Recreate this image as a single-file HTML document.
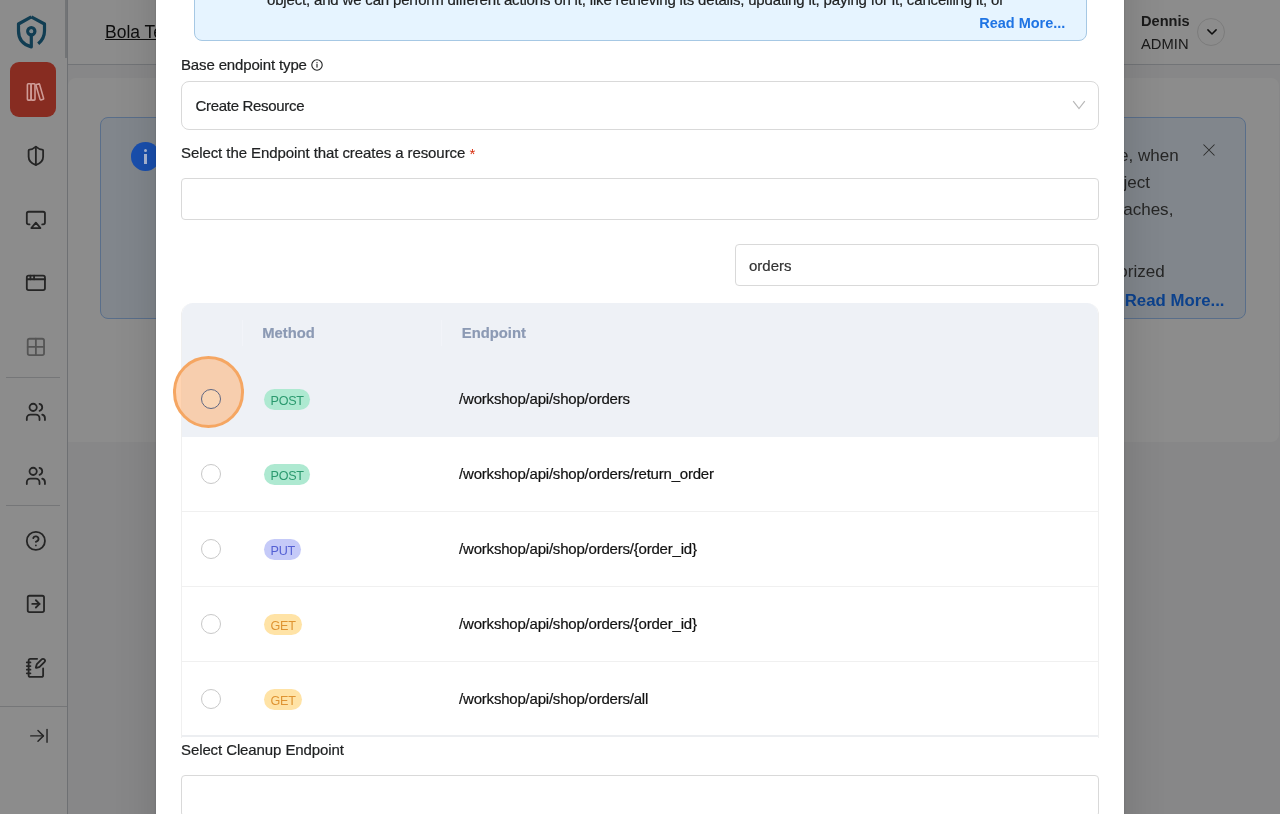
<!DOCTYPE html>
<html>
<head>
<meta charset="utf-8">
<style>
*{box-sizing:border-box;margin:0;padding:0}
html,body{width:1280px;height:814px;overflow:hidden;background:#f6f6f7;font-family:"Liberation Sans",sans-serif;}
.abs{position:absolute}
#page{position:absolute;left:0;top:0;width:1280px;height:814px;background:#f6f6f7;overflow:hidden;will-change:transform}
#sidebar{position:absolute;left:0;top:0;width:68px;height:814px;background:#fff;border-right:1px solid #c9ccd1}
#header{position:absolute;left:68px;top:0;width:1212px;height:65.3px;background:#fff;border-bottom:1.3px solid #d0d3d9}
#card{position:absolute;left:68px;top:77.5px;width:1210.5px;height:364.5px;background:#fff;border-radius:8px 8px 8px 0}
#banner{position:absolute;left:100px;top:116.5px;width:1146px;height:202.5px;background:#ebf5ff;border:1px solid #a2c8fb;border-radius:8px}
.sico{position:absolute;left:24.9px;width:21.75px;height:21.75px;fill:none;stroke:#444;stroke-width:2;stroke-linecap:round;stroke-linejoin:round}
.bt{font-size:17.05px;line-height:27px;color:#454545;white-space:nowrap}
.sdiv{position:absolute;left:6px;width:54px;height:1px;background:#d6d8db}
#overlay{position:absolute;left:0;top:0;width:1280px;height:814px;background:rgba(0,0,0,0.45)}
#modal{position:absolute;left:0;top:0;width:1280px;height:814px;color:#202223;-webkit-text-stroke:0.2px;will-change:transform}
#modal>*{margin-left:157px}
#mbg{position:absolute;left:156.25px;top:-60px;width:967.5px;height:934px;margin-left:0 !important;background:#fff;box-shadow:0 0 40px rgba(0,0,0,0.16),0 0 2px rgba(0,0,0,0.18)}
.lbl{position:absolute;left:24px;font-size:15px;line-height:20px;color:#202223;white-space:nowrap}
.box{position:absolute;left:24px;width:918px;background:#fff;border:1px solid #d9d9d9}
.row{position:absolute;left:0;width:918px;height:75px;border-bottom:1px solid #f0f0f0;background:#fff}
.radio{position:absolute;left:20px;top:27.2px;width:20px;height:20px;border-radius:50%;border:1px solid #c8c8c8;background:#fff}
.tag{-webkit-text-stroke:0;position:absolute;left:83px;top:26.5px;height:21px;border-radius:11px;font-size:12.6px;letter-spacing:-0.3px;line-height:24px;padding:0 6.3px 0 6.6px;white-space:nowrap}
.ep{position:absolute;left:278.1px;top:26.5px;letter-spacing:-0.21px;font-size:15px;line-height:20px;color:#121212;white-space:nowrap}
.post{background:#aee9d1;color:#2b9a6f}
.put{background:#c5caf8;color:#5460d4}
.get{background:#ffe3a6;color:#df9432}
</style>
</head>
<body>
<div id="page">
  <div id="header">
    <div class="abs" id="bola" style="left:37px;top:20px;font-size:17.5px;line-height:24px;color:#1a1a1a;text-decoration:underline;white-space:nowrap">Bola Test</div>
    <div class="abs" id="dennis" style="left:1073px;top:11.2px;font-size:14.6px;line-height:20px;font-weight:bold;color:#303030;white-space:nowrap">Dennis</div>
    <div class="abs" id="admin" style="left:1073px;top:34.2px;font-size:14.75px;line-height:20px;color:#303030;white-space:nowrap">ADMIN</div>
    <div class="abs" id="ddbtn" style="left:1129.3px;top:18.2px;width:28px;height:28px;border-radius:50%;border:1px solid #e1e1e1"></div>
    <svg class="abs" style="left:1136.5px;top:26px" width="14" height="12" viewBox="0 0 14 12"><path d="M2.9 3.9 L7 8 L11.1 3.9" fill="none" stroke="#1a1a1a" stroke-width="1.5" stroke-linecap="round" stroke-linejoin="round"/></svg>
  </div>
  <div id="card"></div>
  <div id="banner">
    <div class="abs bt" style="right:66.4px;top:24.8px">e, when</div>
    <div class="abs bt" style="left:1022.4px;top:51.7px">ject</div>
    <div class="abs bt" style="left:1022.2px;top:78.7px">aches,</div>
    <div class="abs bt" style="left:1017.3px;top:140.4px">orized</div>
    <div class="abs" style="right:20.5px;top:171.5px;font-size:16.8px;line-height:24px;font-weight:bold;color:#1677ff;white-space:nowrap">Read More...</div>
    <svg class="abs" style="left:1100.6px;top:25.2px" width="14" height="14" viewBox="0 0 14 14"><path d="M1.5 1.5 L12.5 12.5 M12.5 1.5 L1.5 12.5" fill="none" stroke="#505050" stroke-width="1.05"/></svg>
  </div>
  <div id="sidebar">
    <div class="abs" style="left:65px;top:0;width:2px;height:58px;background:#cfd3d8"></div>
    <svg class="abs" style="left:0;top:0" width="64" height="64" viewBox="0 0 64 64" fill="none" stroke="#1f6f96" stroke-width="3.2" stroke-linejoin="round">
      <path d="M31.3 16.9 L18.5 24 V31 C18.5 39.3 23.5 44.8 31.3 46.9 V36"/>
      <path d="M31.3 16.9 L44.5 24 V31 C44.5 36.3 42.3 40.4 38.2 43.8" stroke-linecap="butt"/>
      <circle cx="31.3" cy="31.3" r="3.6"/>
      <circle cx="31.3" cy="31.3" r="1.7" fill="#e2f6ff" stroke="none"/>
    </svg>
    <div class="abs" style="left:10.2px;top:62.3px;width:46px;height:55.2px;border-radius:9px;background:#f6503d"></div>
    <!-- shield-half -->
    <svg class="sico" style="left:25.23px;top:145.43px" viewBox="0 0 24 24"><path d="M20 13c0 5-3.5 7.5-7.66 8.95a1 1 0 0 1-.67-.01C7.5 20.5 4 18 4 13V6a1 1 0 0 1 1-1c2 0 4.500-1.200 6.240-2.720a1.170 1.170 0 0 1 1.520 0C14.510 3.810 17 5 19 5a1 1 0 0 1 1 1z"/><path d="M12 22V2"/></svg>
    <!-- airplay -->
    <svg class="sico" style="left:25.23px;top:208.72px" viewBox="0 0 24 24"><path d="M5 17H4a2 2 0 0 1-2-2V5a2 2 0 0 1 2-2h16a2 2 0 0 1 2 2v10a2 2 0 0 1-2 2h-1"/><path d="m12 15 5 6H7Z"/></svg>
    <!-- app-window -->
    <svg class="sico" style="left:25.23px;top:272.02px" viewBox="0 0 24 24"><rect x="2" y="4" width="20" height="16" rx="2"/><path d="M10 4v4"/><path d="M2 8h20"/><path d="M6 4v4"/></svg>
    <!-- grid -->
    <svg class="sico" style="left:25.23px;top:335.72px;stroke:#9c9c9c" viewBox="0 0 24 24"><rect x="3" y="3" width="18" height="18" rx="2"/><path d="M3 12h18"/><path d="M12 3v18"/></svg>
    <div class="sdiv" style="top:377.2px"></div>
    <!-- users -->
    <svg class="sico" style="left:25.23px;top:400.52px" viewBox="0 0 24 24"><path d="M16 21v-2a4 4 0 0 0-4-4H6a4 4 0 0 0-4 4v2"/><circle cx="9" cy="7" r="4"/><path d="M22 21v-2a4 4 0 0 0-3-3.870"/><path d="M16 3.130a4 4 0 0 1 0 7.750"/></svg>
    <svg class="sico" style="left:25.23px;top:465.03px" viewBox="0 0 24 24"><path d="M16 21v-2a4 4 0 0 0-4-4H6a4 4 0 0 0-4 4v2"/><circle cx="9" cy="7" r="4"/><path d="M22 21v-2a4 4 0 0 0-3-3.870"/><path d="M16 3.130a4 4 0 0 1 0 7.750"/></svg>
    <div class="sdiv" style="top:505.4px"></div>
    <!-- help -->
    <svg class="sico" style="left:25.23px;top:529.52px" viewBox="0 0 24 24"><circle cx="12" cy="12" r="10"/><path d="M9.090 9a3 3 0 0 1 5.830 1c0 2-3 3-3 3"/><path d="M12 17h.01"/></svg>
    <!-- square-arrow-right -->
    <svg class="sico" style="left:25.23px;top:593.23px" viewBox="0 0 24 24"><rect x="3" y="3" width="18" height="18" rx="2"/><path d="M8 12h8"/><path d="m12 16 4-4-4-4"/></svg>
    <!-- notebook-pen -->
    <svg class="sico" style="left:25.23px;top:656.72px" viewBox="0 0 24 24"><path d="M13.400 2H6a2 2 0 0 0-2 2v16a2 2 0 0 0 2 2h12a2 2 0 0 0 2-2v-7.400"/><path d="M2 6h4"/><path d="M2 10h4"/><path d="M2 14h4"/><path d="M2 18h4"/><path d="M21.378 5.626a1 1 0 1 0-3.004-3.004l-5.010 5.012a2 2 0 0 0-.506.854l-.837 2.870a.5.5 0 0 0 .620.620l2.870-.837a2 2 0 0 0 .854-.506z"/></svg>
    <div class="sdiv" style="top:705.6px;left:0;width:67px"></div>
    <!-- arrow-right-to-line -->
    <svg class="sico" style="left:27.92px;top:725.22px;stroke-width:1.6" viewBox="0 0 24 24"><path d="M17 12H3"/><path d="m11 18 6-6-6-6"/><path d="M21 5v14"/></svg>
  </div>
</div>
<div id="overlay"></div>
<div id="post" class="abs" style="left:0;top:0;width:1280px;height:814px;will-change:transform">
  <svg class="abs" style="left:20px;top:78px" width="32" height="28" viewBox="20 78 32 28" fill="none" stroke="#cf9c97" stroke-width="1.6" stroke-linejoin="round">
    <rect x="27.4" y="83.8" width="3.7" height="16.3" rx="0.9"/>
    <rect x="31.1" y="83.8" width="3.9" height="16.3" rx="0.9"/>
    <path d="M36.5 84.5 L38.7 83.9 Q39.4 83.8 39.6 84.4 L43.6 98.4 Q43.8 99.1 43.1 99.3 L41 99.9 Q40.3 100.1 40.1 99.4 L36 85.4 Q35.8 84.7 36.5 84.5 Z"/>
  </svg>
  <div class="abs" style="left:130.9px;top:142px;width:28.7px;height:28.7px;border-radius:50%;background:#194fae"></div>
  <div class="abs" style="left:143.8px;top:149px;width:3.2px;height:3.2px;border-radius:50%;background:#a9b6d3"></div>
  <div class="abs" style="left:144px;top:154.1px;width:2.8px;height:9.8px;background:#a9b6d3"></div>
</div>
<div id="modal">
  <div id="mbg"></div>
  <!-- info box -->
  <div id="info" class="abs" style="left:37px;top:-60px;width:893px;height:101px;background:#e6f4ff;border:1px solid #a6c8e4;border-radius:8px"></div>
  <div id="infotxt" class="abs" style="left:110px;top:-10px;letter-spacing:-0.17px;font-size:15px;line-height:20px;white-space:nowrap;color:#202223">object, and we can perform different actions on it, like retrieving its details, updating it, paying for it, cancelling it, or</div>
  <div id="readmore" class="abs" style="left:822.2px;top:13px;font-size:14.5px;line-height:20px;font-weight:bold;-webkit-text-stroke:0;color:#1f74e4;white-space:nowrap">Read More...</div>

  <div class="lbl" id="l1" style="top:54.7px;letter-spacing:-0.145px">Base endpoint type</div>
  <svg id="i1" class="abs" style="left:154px;top:58.8px" width="12" height="12" viewBox="0 0 12 12"><circle cx="6" cy="6" r="5.2" fill="none" stroke="#202223" stroke-width="1.1"/><rect x="5.45" y="5" width="1.1" height="3.6" fill="#202223"/><rect x="5.45" y="3.1" width="1.1" height="1.2" fill="#202223"/></svg>

  <div class="box" id="sel" style="top:81px;height:48.6px;border-radius:8px"></div>
  <div class="abs" id="seltxt" style="left:38.5px;top:95.6px;letter-spacing:-0.31px;font-size:15px;line-height:20px;white-space:nowrap;color:#202223">Create Resource</div>
  <svg class="abs" id="selarrow" style="left:914.8px;top:99.2px" width="14" height="12" viewBox="0 0 14 12"><path d="M1.2 2.2 L7 9.6 L12.8 2.2" fill="none" stroke="#b8b8b8" stroke-width="1.2"/></svg>

  <div class="lbl" id="l2" style="top:142.8px;letter-spacing:-0.08px">Select the Endpoint that creates a resource</div>
  <div class="abs" id="ast" style="left:312.6px;top:143.5px;-webkit-text-stroke:0;font-size:15px;line-height:20px;color:#d82c0d">*</div>
  <div class="box" id="inp1" style="top:177.8px;height:42.3px;border-radius:4px"></div>

  <div class="box" id="search" style="left:578.4px;width:364px;top:243.7px;height:42.2px;border-radius:4px"></div>
  <div class="abs" id="searchtxt" style="left:592px;top:255.6px;font-size:15px;line-height:20px;color:#333;white-space:nowrap">orders</div>

  <!-- table -->
  <div id="table" class="abs" style="left:24px;top:303px;width:918px;height:434.5px;border-radius:12px 12px 0 0;overflow:hidden;border-left:1px solid #f0f0f0;border-right:1px solid #f0f0f0;">
    <div class="abs" style="left:-1px;top:0;width:918px;height:59px;background:#eef1f6"></div>
    <div class="abs" style="left:59.5px;top:17px;width:1px;height:26px;background:#f2f4f9"></div>
    <div class="abs" style="left:258.5px;top:17px;width:1px;height:26px;background:#f2f4f9"></div>
    <div class="abs" style="left:80.2px;top:19.6px;font-size:14.8px;line-height:20px;font-weight:bold;color:#8c9ab4">Method</div>
    <div class="abs" style="left:279.8px;top:19.6px;font-size:14.8px;line-height:20px;font-weight:bold;color:#8c9ab4">Endpoint</div>
    <div class="row" style="left:-1px;top:59px;background:#eef1f6;border-bottom-color:#eef1f6"><div class="radio" style="border:1.2px solid #5f6782;background:rgba(255,235,200,0.25);z-index:5"></div><div class="tag post">POST</div><div class="ep">/workshop/api/shop/orders</div></div>
    <div class="row" style="left:-1px;top:134px"><div class="radio"></div><div class="tag post">POST</div><div class="ep">/workshop/api/shop/orders/return_order</div></div>
    <div class="row" style="left:-1px;top:209px"><div class="radio"></div><div class="tag put">PUT</div><div class="ep">/workshop/api/shop/orders/{order_id}</div></div>
    <div class="row" style="left:-1px;top:284px"><div class="radio"></div><div class="tag get">GET</div><div class="ep">/workshop/api/shop/orders/{order_id}</div></div>
    <div class="row" style="left:-1px;top:359px;border-bottom:2px solid #eceef1"><div class="radio"></div><div class="tag get">GET</div><div class="ep">/workshop/api/shop/orders/all</div></div>
  </div>
  <div id="hl" class="abs" style="left:15.6px;top:356.2px;width:71.6px;height:71.6px;border-radius:50%;background:rgba(255,176,115,0.55);border:3px solid #f5a662"></div>

  <div class="lbl" id="l3" style="top:739.7px;letter-spacing:-0.1px">Select Cleanup Endpoint</div>
  <div class="box" id="inp2" style="top:775px;height:42px;border-radius:4px"></div>
</div>
</body>
</html>
